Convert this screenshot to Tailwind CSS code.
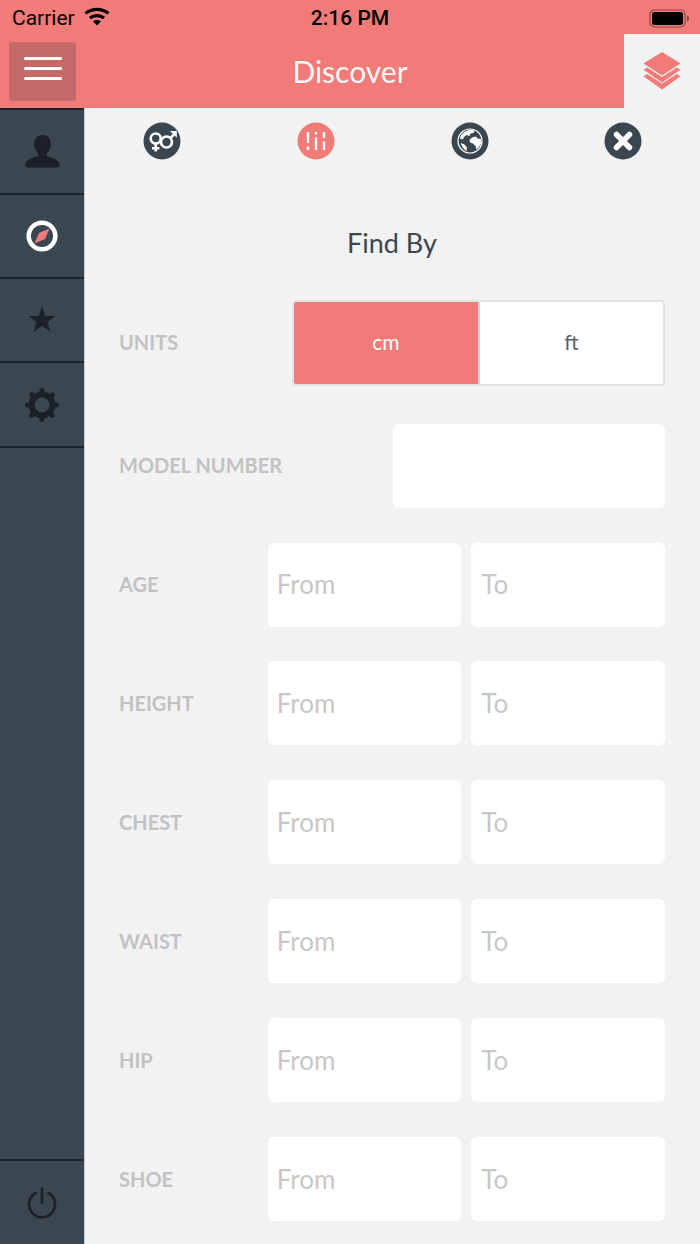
<!DOCTYPE html>
<html lang="en">
<head>
  <meta charset="UTF-8">
  <title>Discover</title>
  <script src="https://cdn.jsdelivr.net/npm/@tailwindcss/browser@4"></script>
</head>
<body class="h-[1244px] w-[700px] overflow-hidden bg-[#f2f2f2] font-['Lato',sans-serif]">

  <!-- status bar + nav -->
  <header class="relative h-[108px] bg-[#f17b78]">
    <div class="flex h-[34px] items-center justify-between pl-3 pr-[10px] pt-[2px] font-['Roboto',sans-serif] text-black">
      <div class="flex w-[200px] items-center gap-[9px]">
        <span class="text-[21px] leading-none">Carrier</span>
        <svg class="mb-[3px] h-[19px] w-[26px]" viewBox="0 0 26 19" fill="none" stroke="#000" stroke-width="3.2">
          <path d="M1.6 6.4C8 .9 18 .9 24.4 6.4"/>
          <path d="M6 11c3.900-3.300 10.100-3.300 14 0"/>
          <path d="M13 18.600l-4-4.300c2.300-1.800 5.700-1.800 8 0z" fill="#000" stroke="none"/>
        </svg>
      </div>
      <span class="pr-[2px] text-[21px] font-medium leading-none">2:16 PM</span>
      <div class="flex w-[200px] justify-end">
        <svg class="h-[19px] w-[41px]" viewBox="0 0 41 19">
          <rect x="1" y="1" width="35" height="17" rx="4.500" fill="none" stroke="#000" stroke-opacity=".45" stroke-width="1.200"/>
          <rect x="3" y="3" width="31" height="13" rx="2.500" fill="#000"/>
          <path d="M38 6.500c1.500.5 2 1.700 2 3s-.5 2.500-2 3z" fill="#000" fill-opacity=".45"/>
        </svg>
      </div>
    </div>
    <div class="flex h-[74px] items-center">
      <button class="ml-[9px] flex h-[59px] w-[67px] flex-col items-center justify-center gap-[7px] rounded-[3px] bg-[#c56a68] pb-[5px]">
        <span class="h-[3px] w-[38px] rounded-full bg-white"></span>
        <span class="h-[3px] w-[38px] rounded-full bg-white"></span>
        <span class="h-[3px] w-[38px] rounded-full bg-white"></span>
      </button>
      <h1 class="absolute left-0 w-[700px] text-center text-[30px] leading-none text-white/95">Discover</h1>
      <div class="relative ml-auto flex h-[74px] w-[76px] items-center justify-center self-start bg-[#f2f2f2]">
        <svg class="h-[38px] w-[38px]" viewBox="0 0 38 38" fill="#f17b78">
          <path d="M19 0 37.500 11.500 19 23.500.5 11.500z"/>
          <path d="M4 15.500 19 25l15-9.500 3.500 2.300L19 30.500.5 17.800z"/>
          <path d="M4 22 19 31.500 34 22l3.500 2.300L19 37.500.5 24.300z"/>
        </svg>
      </div>
    </div>
  </header>

  <div class="flex h-[1136px]">
    <!-- sidebar -->
    <aside class="flex w-[85px] shrink-0 flex-col border-r border-[#c9ced2] bg-[#3a4650]">
      <div class="flex h-[87px] items-center justify-center border-y-2 border-t-[#1c2328] border-b-[#1c2328]">
        <svg class="h-[35px] w-[35px]" viewBox="0 0 36 36" fill="#1b2126">
          <path d="M18 1c5.500 0 8.500 4 8.500 9.500 0 4-1.700 7.500-4 9.500v2.700c5 1.800 13 3.500 13 9.300 0 1.500-.8 2.500-2.500 2.500H2.500C.8 34.500 0 33.500 0 32c0-5.800 8-7.500 13.500-9.300V20c-2.300-2-4-5.500-4-9.500C9.500 5 12.500 1 18 1z"/>
        </svg>
      </div>
      <div class="flex h-[84px] items-center justify-center border-b-2 border-[#1c2328]">
        <svg class="h-[32px] w-[32px]" viewBox="0 0 32 32">
          <circle cx="16" cy="16" r="13.300" fill="none" stroke="#fff" stroke-width="4.500"/>
          <path d="M23.500 8.500 19 19 8.500 23.500 13 13z" fill="#f17b78"/>
        </svg>
      </div>
      <div class="flex h-[84px] items-center justify-center border-b-2 border-[#1c2328]">
        <svg class="h-[28px] w-[28px]" viewBox="0 0 28 28" fill="#1b2126">
          <path d="M14 .5l3.400 9.400h10.100l-8 6.100 2.900 9.700-8.400-5.700-8.400 5.700 2.900-9.700-8-6.100h10.100z"/>
        </svg>
      </div>
      <div class="flex h-[85px] items-center justify-center border-b-2 border-[#1c2328]">
        <svg class="h-[34px] w-[34px]" viewBox="0 0 34 34" fill="none" stroke="#1b2126">
          <circle cx="17" cy="17" r="10.500" stroke-width="6"/>
          <path stroke-width="5" stroke-linecap="round" d="M17 2.500v4M17 27.500v4M2.500 17h4M27.500 17h4M6.700 6.700l2.900 2.900M24.400 24.400l2.900 2.900M6.700 27.300l2.900-2.900M24.400 9.600l2.900-2.900"/>
        </svg>
      </div>
      <div class="mt-auto flex h-[85px] items-center justify-center border-t-2 border-[#1c2328]">
        <svg class="h-[32px] w-[32px]" viewBox="0 0 32 32" fill="none" stroke="#1b2126" stroke-width="2.600" stroke-linecap="round">
          <path d="M16 1.500v14"/>
          <path d="M9.500 6a13 13 0 1 0 13 0"/>
        </svg>
      </div>
    </aside>

    <main class="min-w-0 flex-1 pt-[14px]">
      <!-- filter tabs -->
      <div class="flex h-[38px] pl-[58px]">
        <div class="w-[154px]">
          <svg class="h-[38px] w-[38px]" viewBox="0 0 38 38">
            <circle cx="19" cy="19" r="18.500" fill="#3a4650"/>
            <g fill="none" stroke="#fff" stroke-width="2.600">
              <circle cx="12.700" cy="16.500" r="5"/>
              <path d="M12.700 21.500v8M9 26.200h7.400"/>
              <circle cx="23.500" cy="20" r="5.500"/>
              <path d="M27.500 16l4.500-4.700"/>
            </g>
            <path d="M27 9h6.800v6.800z" fill="#fff"/>
          </svg>
        </div>
        <div class="w-[154px]">
          <svg class="h-[38px] w-[38px]" viewBox="0 0 38 38">
            <circle cx="19" cy="19" r="18.500" fill="#f17b78"/>
            <g stroke="#fff" stroke-width="2.400">
              <path d="M11 10v11M11 24.500v3.500M19 10v2.500M19 15.500V28M27 10v6M27 19.500V28"/>
            </g>
          </svg>
        </div>
        <div class="w-[153px]">
          <svg class="h-[38px] w-[38px]" viewBox="0 0 38 38">
            <circle cx="19" cy="19" r="18.500" fill="#3a4650"/>
            <circle cx="19" cy="19" r="12" fill="none" stroke="#fff" stroke-width="1.200"/>
            <path d="M13 10l6-2.500 5 1-1.500 2.500-3 .5-1 2.500-3-1-2.500 2-1 2.500-3-1c0-2.500 2-5 4.500-6.500zM21 15.500l4-1 1.500 2 3.500.5.500 3.500-2.500 4.500-2.500 2.500-1-3.500-2.500-2.500-3-1-.5-2.500zM10 21l3.500 1.500 2.500 3-.5 3.500C12.500 27.500 10.500 24.500 10 21z" fill="#fff"/>
          </svg>
        </div>
        <div>
          <svg class="h-[38px] w-[38px]" viewBox="0 0 38 38">
            <circle cx="19" cy="19" r="18.500" fill="#3a4650"/>
            <path d="M12.500 12.500l13 13M25.500 12.500l-13 13" stroke="#fff" stroke-width="5.500" stroke-linecap="round"/>
          </svg>
        </div>
      </div>

      <h2 class="mt-[66px] pr-[1px] text-center text-[27px] leading-[34px] text-[#3a4650]">Find By</h2>

      <div class="mt-[40px] pl-[34px] pr-[35px]">
        <!-- units -->
        <div class="flex h-[86px] items-center justify-between">
          <span class="pb-[2px] text-[20px] font-bold text-[#c2c2c2]">UNITS</span>
          <div class="flex h-[86px] w-[373px] overflow-hidden rounded-[4px] border-2 border-[#e3e3e3] bg-white pb-0 text-[21px]">
            <div class="flex w-[184px] items-center justify-center bg-[#f17b78] pb-[2px] text-white">cm</div>
            <div class="flex flex-1 items-center justify-center border-l-2 border-[#d5d5d5] pb-[2px] text-[#55616d]">ft</div>
          </div>
        </div>

        <div class="mt-[38px] flex h-[84px] items-center justify-between">
          <span class="pb-[2px] text-[20px] font-bold text-[#c2c2c2]">MODEL NUMBER</span>
          <div class="h-[84px] w-[272px] rounded-[6px] bg-white"></div>
        </div>

        <div class="mt-[35px] flex flex-col gap-[35px]">
          <div class="-mb-px flex h-[84px] items-center">
            <span class="w-[149px] pb-[2px] text-[20px] font-bold text-[#c2c2c2]">AGE</span>
            <div class="flex h-[84px] w-[194px] items-center rounded-[6px] bg-white pb-[2px] pl-[9px] text-[26px] text-[#c7c7c7]">From</div>
            <div class="ml-[10px] flex h-[84px] w-[194px] items-center rounded-[6px] bg-white pb-[2px] pl-[10px] text-[26px] text-[#c7c7c7]">To</div>
          </div>
          <div class="flex h-[84px] items-center">
            <span class="w-[149px] text-[20px] font-bold text-[#c2c2c2]">HEIGHT</span>
            <div class="flex h-[84px] w-[194px] items-center rounded-[6px] bg-white pl-[9px] text-[26px] text-[#c7c7c7]">From</div>
            <div class="ml-[10px] flex h-[84px] w-[194px] items-center rounded-[6px] bg-white pl-[10px] text-[26px] text-[#c7c7c7]">To</div>
          </div>
          <div class="flex h-[84px] items-center">
            <span class="w-[149px] text-[20px] font-bold text-[#c2c2c2]">CHEST</span>
            <div class="flex h-[84px] w-[194px] items-center rounded-[6px] bg-white pl-[9px] text-[26px] text-[#c7c7c7]">From</div>
            <div class="ml-[10px] flex h-[84px] w-[194px] items-center rounded-[6px] bg-white pl-[10px] text-[26px] text-[#c7c7c7]">To</div>
          </div>
          <div class="flex h-[84px] items-center">
            <span class="w-[149px] text-[20px] font-bold text-[#c2c2c2]">WAIST</span>
            <div class="flex h-[84px] w-[194px] items-center rounded-[6px] bg-white pl-[9px] text-[26px] text-[#c7c7c7]">From</div>
            <div class="ml-[10px] flex h-[84px] w-[194px] items-center rounded-[6px] bg-white pl-[10px] text-[26px] text-[#c7c7c7]">To</div>
          </div>
          <div class="flex h-[84px] items-center">
            <span class="w-[149px] text-[20px] font-bold text-[#c2c2c2]">HIP</span>
            <div class="flex h-[84px] w-[194px] items-center rounded-[6px] bg-white pl-[9px] text-[26px] text-[#c7c7c7]">From</div>
            <div class="ml-[10px] flex h-[84px] w-[194px] items-center rounded-[6px] bg-white pl-[10px] text-[26px] text-[#c7c7c7]">To</div>
          </div>
          <div class="flex h-[84px] items-center">
            <span class="w-[149px] text-[20px] font-bold text-[#c2c2c2]">SHOE</span>
            <div class="flex h-[84px] w-[194px] items-center rounded-[6px] bg-white pl-[9px] text-[26px] text-[#c7c7c7]">From</div>
            <div class="ml-[10px] flex h-[84px] w-[194px] items-center rounded-[6px] bg-white pl-[10px] text-[26px] text-[#c7c7c7]">To</div>
          </div>
        </div>
      </div>
    </main>
  </div>
</body>
</html>
